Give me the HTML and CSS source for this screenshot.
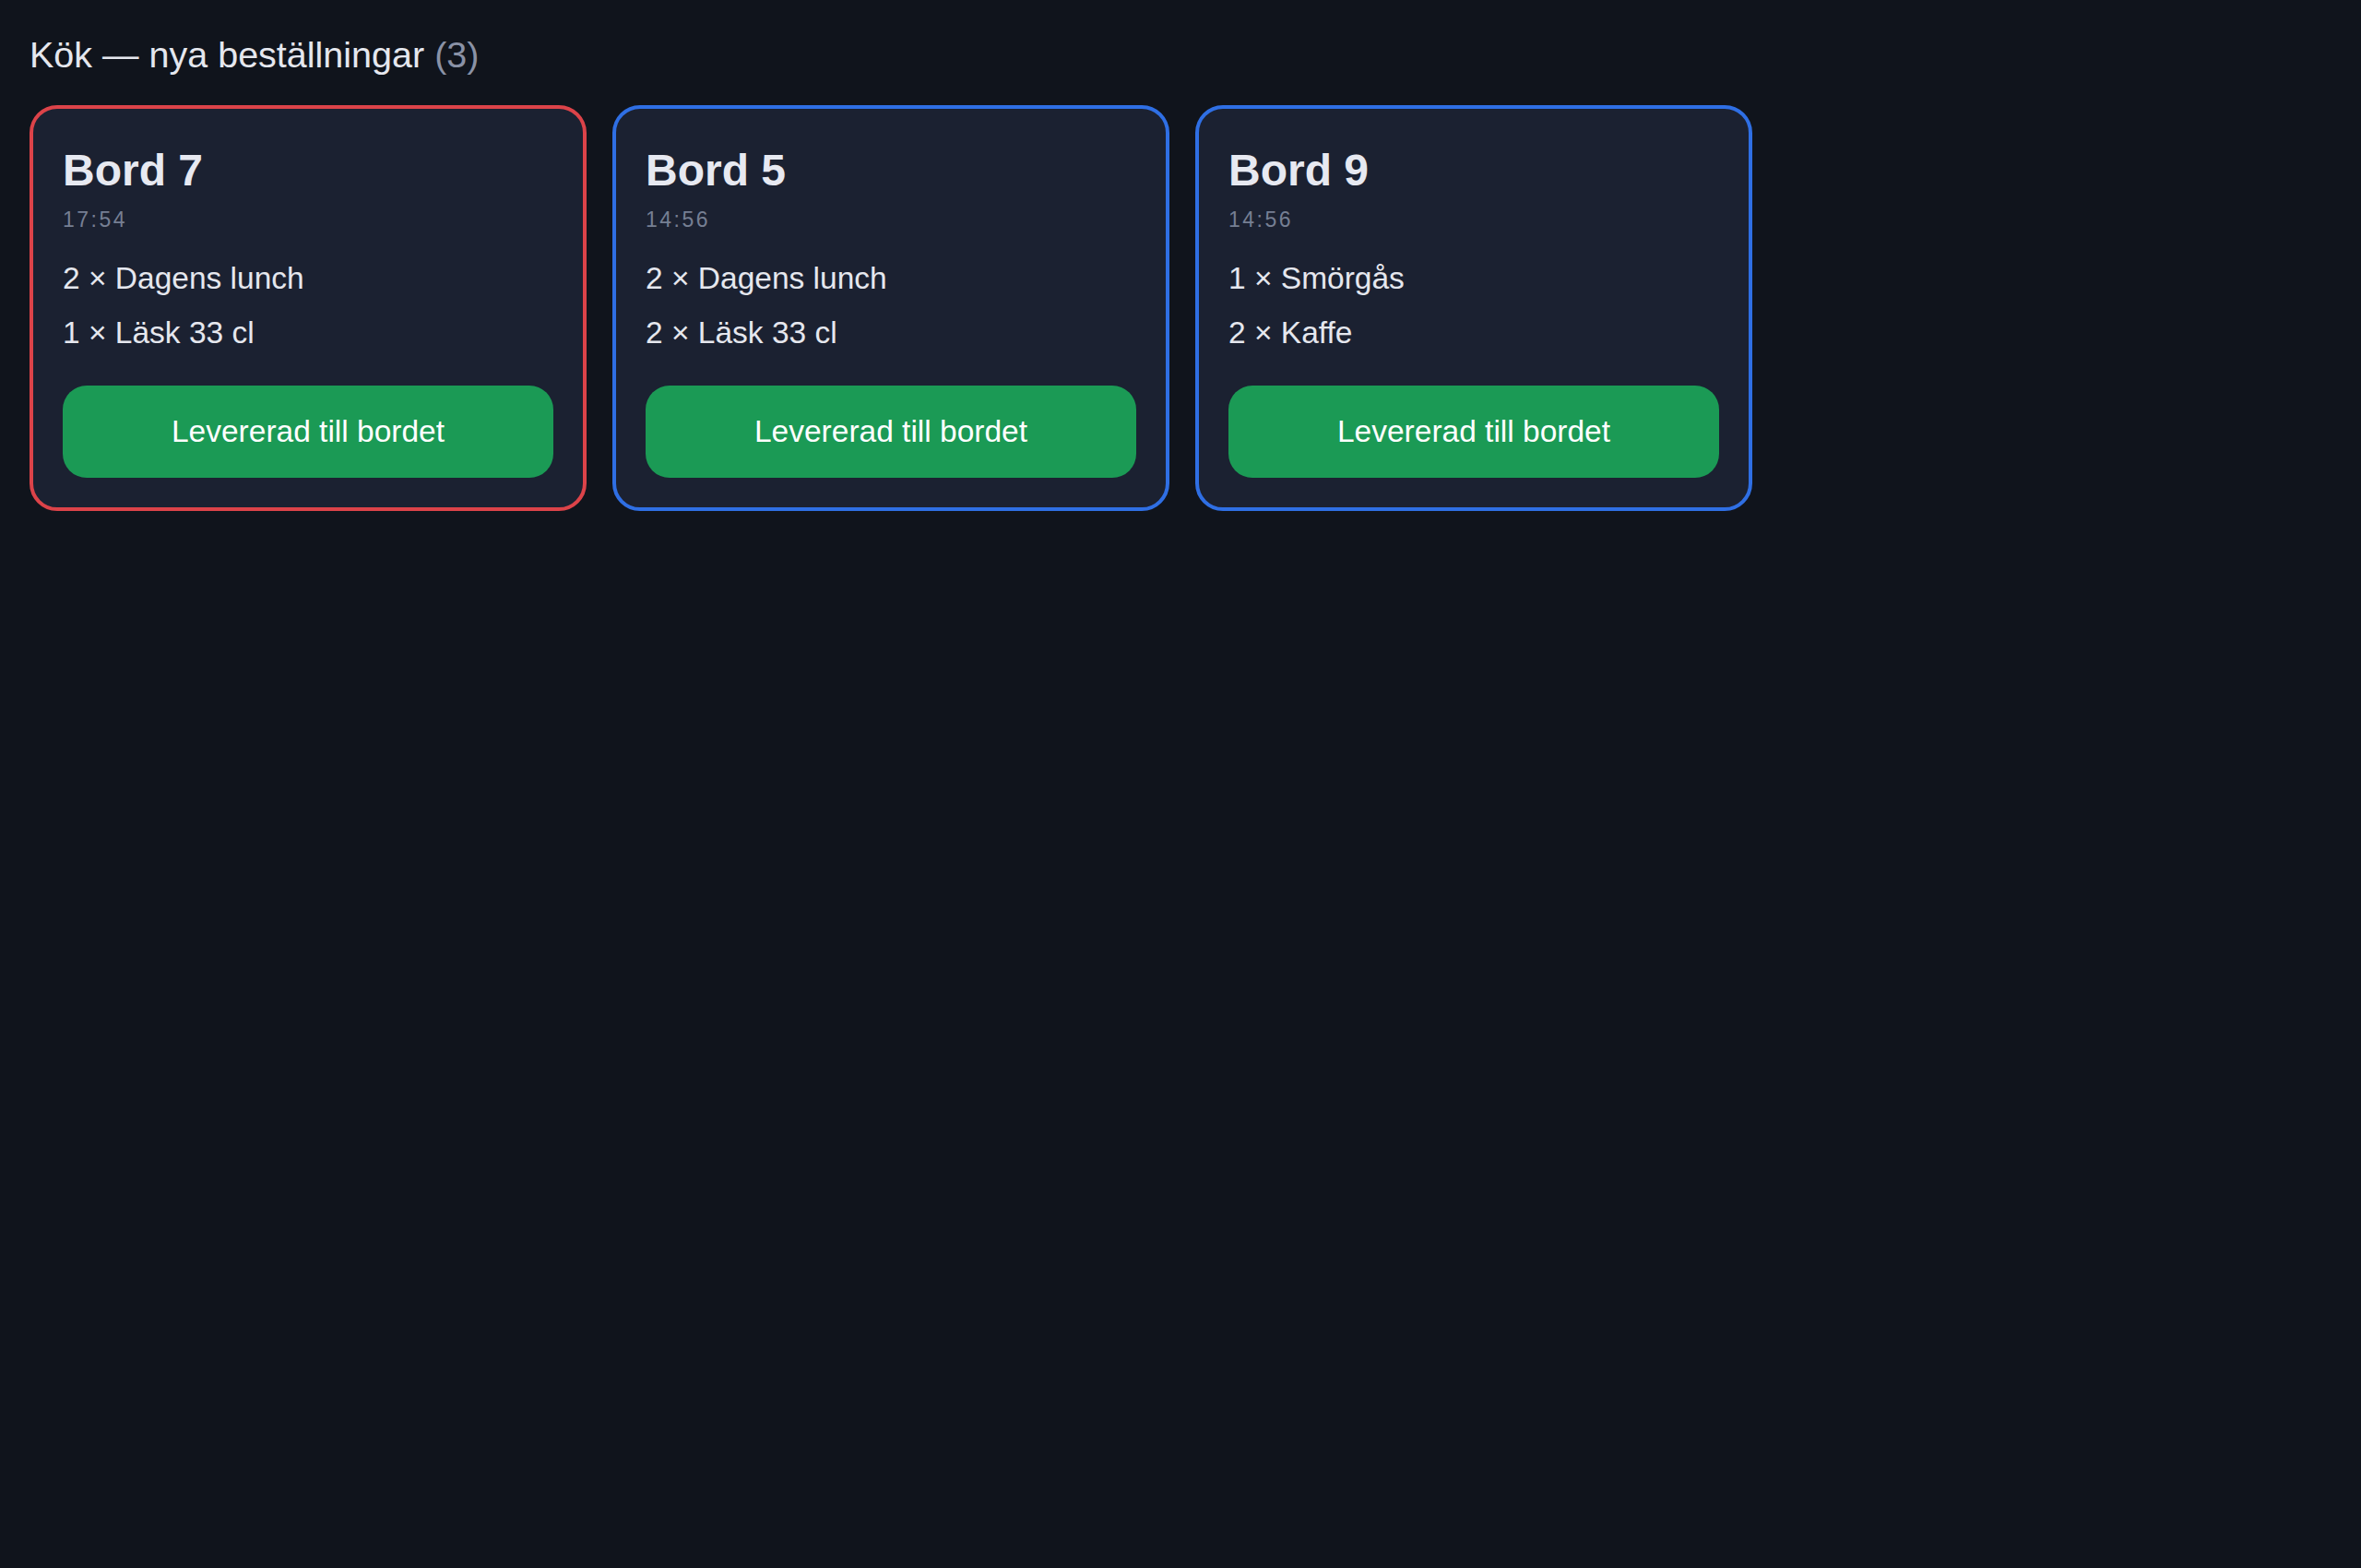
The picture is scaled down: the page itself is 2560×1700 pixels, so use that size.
FILE: index.html
```html
<!DOCTYPE html>
<html lang="sv">
  <head>
    <meta charset="UTF-8" />
    <meta name="viewport" content="width=device-width, initial-scale=1.0" />
    <title>Kök — nya beställningar</title>
    <link rel="stylesheet" href="styles.css">
  </head>
  <body>
    <h1 class="page-title">Kök — nya beställningar <span class="count">(3)</span></h1>

    <main class="orders">
      <section class="order order-late">
        <h2>Bord 7</h2>
        <p class="order-time">17:54</p>
        <ul class="order-items">
          <li>2 × Dagens lunch</li>
          <li>1 × Läsk 33 cl</li>
        </ul>
        <button class="deliver-button">Levererad till bordet</button>
      </section>

      <section class="order">
        <h2>Bord 5</h2>
        <p class="order-time">14:56</p>
        <ul class="order-items">
          <li>2 × Dagens lunch</li>
          <li>2 × Läsk 33 cl</li>
        </ul>
        <button class="deliver-button">Levererad till bordet</button>
      </section>

      <section class="order">
        <h2>Bord 9</h2>
        <p class="order-time">14:56</p>
        <ul class="order-items">
          <li>1 × Smörgås</li>
          <li>2 × Kaffe</li>
        </ul>
        <button class="deliver-button">Levererad till bordet</button>
      </section>
    </main>
  </body>
</html>
```
FILE: styles.css
```css
* {
  margin: 0;
  padding: 0;
  box-sizing: border-box;
}

body {
  background-color: #10141c;
  color: #e5e7ee;
  font-family: "Liberation Sans", Arial, sans-serif;
  padding: 32px;
}

.page-title {
  font-size: 39.5px;
  font-weight: normal;
  line-height: 1.4;
  margin-bottom: 27px;
}

.page-title .count {
  color: #8a92a6;
}

.orders {
  display: grid;
  grid-template-columns: repeat(auto-fill, 604px);
  gap: 28px;
}

.order {
  background-color: #1b2131;
  border: 4px solid #2f6fe4;
  border-radius: 30px;
  padding: 32px;
}

.order-late {
  border-color: #dc4349;
}

.order h2 {
  font-size: 48px;
  line-height: 1.46;
  color: #e7e9f1;
}

.order-time {
  margin-top: 5px;
  font-size: 23px;
  letter-spacing: 2.5px;
  color: #767f93;
}

.order-items {
  list-style: none;
  margin-top: 21px;
  font-size: 33.5px;
  line-height: 1.75;
}

.deliver-button {
  display: block;
  width: 100%;
  margin-top: 27px;
  padding: 31px 0;
  border: none;
  border-radius: 26px;
  background-color: #1b9a55;
  color: #ffffff;
  font-family: inherit;
  font-size: 33.5px;
  cursor: pointer;
}

.deliver-button:hover {
  background-color: #17874a;
}
```
